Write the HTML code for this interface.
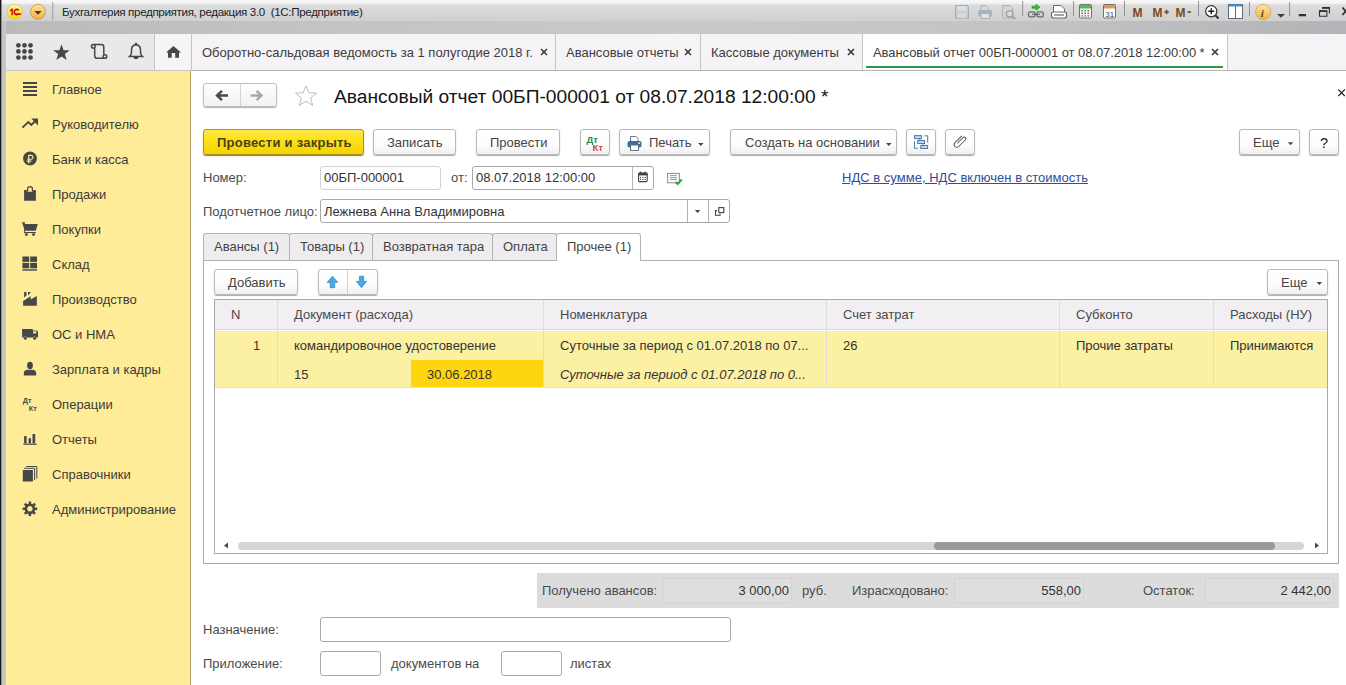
<!DOCTYPE html>
<html><head><meta charset="utf-8">
<style>
*{box-sizing:border-box;margin:0;padding:0}
html,body{width:1346px;height:685px;overflow:hidden;background:#fff;font-family:"Liberation Sans",sans-serif;font-size:13px;color:#4d4d4d}
.a{position:absolute}
.t{position:absolute;white-space:nowrap;line-height:15px}
svg{position:absolute;overflow:visible}
#titlebar{left:0;top:0;width:1346px;height:34px;background:linear-gradient(#f8f8f8 0,#f4f4f4 3px,#dcdcdc 5px,#d0d0d0 21px,#c0c0c0 21px,#c0c0c0 34px)}
#band{left:0;top:21px;width:1346px;height:13px;background:linear-gradient(90deg,#bababa 0,#c4c4c4 25%,#c9c9cb 50%,#c4c4c6 75%,#b4b4b8 100%)}
#frameL{left:0;top:21px;width:6px;height:664px;background:linear-gradient(90deg,#181818 0,#181818 1.2px,#8e8e8e 1.2px,#9a9a9a 2.2px,#c4c4c4 2.2px,#c8c8c8 6px)}
#secpanel{left:6px;top:34px;width:148px;height:37px;background:#e9e9e9;border-bottom:1px solid #c8c8c8}
#homebtn{left:154px;top:34px;width:38px;height:37px;background:#f6f4f6;border-left:1px solid #c4c4c4;border-right:1px solid #c4c4c4;border-bottom:1px solid #c8c8c8}
#tabsbar{left:192px;top:34px;width:1154px;height:37px;background:#f6f3f6;border-bottom:1px solid #b4b4b4}
.otab{position:absolute;top:0;height:36px;border-right:1px solid #c4c4c4}
.otab .t{top:11px;left:10px;color:#3c3c3c}
.otab .x{position:absolute;top:14px;width:8px;height:8px}
#sidebar{left:6px;top:71px;width:185px;height:614px;background:#feec98;border-right:1px solid #b2a462}
.sitem{left:46px;color:#3b3b3b}
.ic{fill:#474747}
</style></head>
<body>
<div id="titlebar" class="a"></div><div id="band" class="a"></div>
<div id="frameL" class="a"></div><div class="a" style="left:0;top:0;width:2.2px;height:21px;background:linear-gradient(90deg,#181818 0,#181818 1.2px,#8e8e8e 1.2px)"></div>
<!-- title icons -->
<svg width="60" height="26" style="left:0;top:0">
  <defs>
    <linearGradient id="g1c" x1="0" y1="0" x2="0" y2="1"><stop offset="0" stop-color="#fffbb0"/><stop offset="1" stop-color="#f8d800"/></linearGradient>
    <linearGradient id="gdd" x1="0" y1="0" x2="0" y2="1"><stop offset="0" stop-color="#fde29a"/><stop offset="1" stop-color="#f6ad45"/></linearGradient>
  </defs>
  <circle cx="14.7" cy="11.8" r="7.5" fill="url(#g1c)" stroke="#e2c45a" stroke-width="0.8"/>
  <path d="M9.6 10.2 l2.2 -1.6 h1.1 v6.6 h-1.5 v-4.6 l-1.2 .8z" fill="#c81400"/>
  <path d="M18.8 10.3 a2.6 2.6 0 1 0 0 3.4" fill="none" stroke="#c81400" stroke-width="1.7"/>
  <path d="M15.6 14.1 h5.6" stroke="#c81400" stroke-width="1.4"/>
  <circle cx="38" cy="11.8" r="7.5" fill="url(#gdd)" stroke="#c69346" stroke-width="0.8"/>
  <path d="M34.3 10.9 h7.4 l-3.7 3.8z" fill="#4a3b22"/>
  <rect x="52.3" y="2" width="0.9" height="18" fill="#9a9a9a"/>
</svg>
<span class="t" style="left:62px;top:4px;font-size:11.6px;letter-spacing:-0.34px;color:#1a1f2a">Бухгалтерия предприятия, редакция 3.0&nbsp; (1С:Предприятие)</span>

<svg width="400" height="26" style="left:946px;top:0">
  <g transform="translate(-946 0)">
  <!-- save disabled -->
  <path d="M955.5 5.5 h12 l1 1 v11.7 h-13z" fill="#c9ced4" stroke="#a3abb4" stroke-width="1"/>
  <rect x="957.5" y="6" width="9" height="4.5" fill="#dde1e5"/>
  <rect x="958" y="13" width="8" height="5" fill="#d5dbd5"/>
  <!-- printer disabled -->
  <path d="M981 5.5 h5 l2 2 v3 h-7z" fill="#d8d8d8" stroke="#a8aeb4" stroke-width=".9"/>
  <rect x="978.2" y="10" width="14" height="6.5" rx="1.5" fill="#aab4c0"/>
  <rect x="981" y="13.5" width="8.5" height="5" fill="#e2e2e2" stroke="#a8aeb4" stroke-width=".9"/>
  <!-- preview disabled -->
  <path d="M1002.7 5.5 h7 l3 3 v9.7 h-10z" fill="#d6d6d6" stroke="#a8aeb4" stroke-width=".9"/>
  <circle cx="1009.6" cy="13.8" r="3.2" fill="#d8dde2" stroke="#9aa2aa" stroke-width="1.4"/>
  <path d="M1011.8 16 l3.4 3" stroke="#9aa2aa" stroke-width="1.8"/>
  <rect x="1022.3" y="1" width="0.9" height="15" fill="#8a8a8a"/>
  <!-- upload arrow + chain -->
  <path d="M1032 6.2 h4 v-2 l4 3 -4 3 v-2 h-4z" fill="#2ec02e" stroke="#1b8a1b" stroke-width=".6"/>
  <rect x="1028.5" y="11.8" width="6.5" height="5" rx="1.6" fill="none" stroke="#6a6a6a" stroke-width="1.3"/>
  <rect x="1036.8" y="11.8" width="6.5" height="5" rx="1.6" fill="none" stroke="#6a6a6a" stroke-width="1.3"/>
  <path d="M1032 14.3 h8" stroke="#6a6a6a" stroke-width="1.2"/>
  <!-- doc + chain -->
  <path d="M1053.5 5.5 h7.5 l3.5 3.5 v4 h-11z" fill="#fff" stroke="#6a6a6a" stroke-width="1"/>
  <rect x="1051.5" y="12" width="15" height="6" rx="2" fill="#fff" stroke="#6a6a6a" stroke-width="1.2"/>
  <path d="M1054 15 h10" stroke="#6a6a6a" stroke-width="1.2"/>
  <rect x="1073" y="1" width="0.9" height="15" fill="#8a8a8a"/>
  <!-- calculator -->
  <rect x="1079.5" y="4.5" width="12" height="13.5" rx="1" fill="#f4f4f4" stroke="#707070" stroke-width="1"/>
  <rect x="1080" y="5" width="11" height="3.5" fill="#4fc04f"/>
  <g fill="#6a6a6a"><rect x="1081.5" y="10" width="1.4" height="1.4"/><rect x="1084.5" y="10" width="1.4" height="1.4"/><rect x="1087.5" y="10" width="1.4" height="1.4" fill="#d02020"/>
  <rect x="1081.5" y="12.6" width="1.4" height="1.4"/><rect x="1084.5" y="12.6" width="1.4" height="1.4"/><rect x="1087.5" y="12.6" width="1.4" height="1.4"/>
  <rect x="1081.5" y="15.2" width="1.4" height="1.4"/><rect x="1084.5" y="15.2" width="1.4" height="1.4"/><rect x="1087.5" y="15.2" width="1.4" height="1.4"/></g>
  <!-- calendar -->
  <rect x="1103.5" y="4.5" width="12" height="13.5" rx="1" fill="#fff" stroke="#707070" stroke-width="1"/>
  <rect x="1104" y="5" width="11" height="3.5" fill="#e09860"/>
  <text x="1105.2" y="16.6" font-family="Liberation Sans" font-size="8" fill="#404040">31</text>
  <rect x="1124" y="1" width="0.9" height="15" fill="#8a8a8a"/>
  <!-- M -->
  <g font-family="Liberation Sans" font-weight="bold" font-size="12" fill="#7a4a22">
    <text x="1132.4" y="16.5">M</text><text x="1152.6" y="16.5">M</text><text x="1175.5" y="16.5">M</text>
  </g>
  <path d="M1164.3 12 h4.6 M1166.6 9.7 v4.6" stroke="#7a4a22" stroke-width="1.6"/>
  <path d="M1187.5 12 h3.6" stroke="#7a4a22" stroke-width="1.6"/>
  <rect x="1198" y="1" width="0.9" height="15" fill="#8a8a8a"/>
  <!-- zoom -->
  <circle cx="1211.3" cy="11.3" r="5.6" fill="#fff" stroke="#303030" stroke-width="1.2"/>
  <path d="M1208.3 11.3 h6 M1211.3 8.3 v6" stroke="#1a1a1a" stroke-width="1.4"/>
  <path d="M1215.5 15.5 l3 3" stroke="#303030" stroke-width="2"/>
  <!-- panel -->
  <rect x="1228.5" y="4.5" width="14" height="14" fill="#fff" stroke="#606a76" stroke-width="1"/>
  <rect x="1229" y="4.5" width="13" height="2" fill="#3c8fd8"/>
  <path d="M1235.5 6.5 v12" stroke="#606a76" stroke-width="1"/>
  <rect x="1249" y="2" width="0.9" height="14" fill="#8a8a8a"/>
  <!-- info -->
  <defs><linearGradient id="ginf" x1="0" y1="0" x2="0" y2="1"><stop offset="0" stop-color="#fde6a6"/><stop offset="1" stop-color="#f3b040"/></linearGradient></defs>
  <circle cx="1263.2" cy="12" r="7.6" fill="url(#ginf)" stroke="#d6a24a" stroke-width=".8"/>
  <text x="1260.8" y="16.8" font-family="Liberation Serif" font-weight="bold" font-style="italic" font-size="11" fill="#5a4420">i</text>
  <path d="M1277 14 h8 l-4 3.7z" fill="#404040"/>
  <rect x="1289.2" y="2" width="0.9" height="14" fill="#8a8a8a"/>
  <!-- window buttons -->
  <rect x="1298.8" y="14" width="7.2" height="2.3" fill="#303030"/>
  <path d="M1322.2 7.6 h7.2 v6 M1319.5 10.8 h7.4 v5.5 h-7.4z" fill="none" stroke="#303030" stroke-width="1.1"/>
  <rect x="1319.5" y="10.4" width="7.4" height="1.6" fill="#303030"/><rect x="1322" y="7.2" width="7.6" height="1.6" fill="#303030"/>
  <path d="M1342.5 7.5 l6 7.5 M1348.5 7.5 l-6 7.5" stroke="#303030" stroke-width="1.8"/>
  </g>
</svg>

<div id="secpanel" class="a"></div>
<div id="homebtn" class="a"></div>
<!-- section panel icons -->
<svg width="190" height="36" style="left:0;top:34px">
  <g class="ic">
    <circle cx="18.4" cy="11.3" r="2.35"/><circle cx="24.45" cy="11.3" r="2.35"/><circle cx="30.5" cy="11.3" r="2.35"/><circle cx="18.4" cy="17.4" r="2.35"/><circle cx="24.45" cy="17.4" r="2.35"/><circle cx="30.5" cy="17.4" r="2.35"/><circle cx="18.4" cy="23.5" r="2.35"/><circle cx="24.45" cy="23.5" r="2.35"/><circle cx="30.5" cy="23.5" r="2.35"/>
    <path d="M61.50 10.20 L63.57 16.15 L69.87 16.28 L64.85 20.09 L66.67 26.12 L61.50 22.52 L56.33 26.12 L58.15 20.09 L53.13 16.28 L59.43 16.15z"/>
    <path d="M173.5 12 L181 18.6 H179 V23.8 H175.2 V18.9 H171.7 V23.8 H168 V18.6 H166 z"/>
  </g>
  <g fill="none" stroke="#474747" stroke-width="1.5">
    <path d="M93.6 10.5 H101.2 Q103.8 10.5 103.8 13.1 V20.6 M104.8 24.3 H97.3 Q94.7 24.3 94.7 21.7 V14.2"/><circle cx="93.3" cy="12.3" r="1.85"/><circle cx="104.9" cy="22.5" r="1.85"/>
    <path d="M129.5 22.5 h13 q-2 -1.8 -2 -4 v-3 q0 -4.3 -4.5 -4.8 q-4.5 .5 -4.5 4.8 v3 q0 2.2 -2 4z"/>
  </g>
  <g class="ic"><rect x="134.8" y="8.8" width="2.4" height="2.2" rx="1"/><path d="M133.5 23 h5 q0 2.2 -2.5 2.2 q-2.5 0 -2.5 -2.2z"/></g>
</svg>

<div id="tabsbar" class="a">
  <div class="otab" style="left:0;width:364px"><span class="t">Оборотно-сальдовая ведомость за 1 полугодие 2018 г.</span>
    <svg class="x" style="left:348px" viewBox="0 0 8 8"><path d="M1 1L7 7M7 1L1 7" stroke="#3a3a3a" stroke-width="1.6"/></svg></div>
  <div class="otab" style="left:364px;width:145px"><span class="t">Авансовые отчеты</span>
    <svg class="x" style="left:128px" viewBox="0 0 8 8"><path d="M1 1L7 7M7 1L1 7" stroke="#3a3a3a" stroke-width="1.6"/></svg></div>
  <div class="otab" style="left:509px;width:162px"><span class="t">Кассовые документы</span>
    <svg class="x" style="left:146px" viewBox="0 0 8 8"><path d="M1 1L7 7M7 1L1 7" stroke="#3a3a3a" stroke-width="1.6"/></svg></div>
  <div class="otab" style="left:671px;width:365px;background:#fff"><span class="t" style="letter-spacing:-0.065px">Авансовый отчет 00БП-000001 от 08.07.2018 12:00:00 *</span>
    <svg class="x" style="left:348px" viewBox="0 0 8 8"><path d="M1 1L7 7M7 1L1 7" stroke="#3a3a3a" stroke-width="1.6"/></svg>
    <div class="a" style="left:3px;top:32px;width:357px;height:2px;background:#2a9a4a"></div></div>
</div>

<div id="sidebar" class="a">
  <span class="t sitem" style="top:11px">Главное</span>
  <span class="t sitem" style="top:46px">Руководителю</span>
  <span class="t sitem" style="top:81px">Банк и касса</span>
  <span class="t sitem" style="top:116px">Продажи</span>
  <span class="t sitem" style="top:151px">Покупки</span>
  <span class="t sitem" style="top:186px">Склад</span>
  <span class="t sitem" style="top:221px">Производство</span>
  <span class="t sitem" style="top:256px">ОС и НМА</span>
  <span class="t sitem" style="top:291px">Зарплата и кадры</span>
  <span class="t sitem" style="top:326px">Операции</span>
  <span class="t sitem" style="top:361px">Отчеты</span>
  <span class="t sitem" style="top:396px">Справочники</span>
  <span class="t sitem" style="top:431px">Администрирование</span>
</div>
<!-- sidebar icons (body coords) -->
<svg width="60" height="520" style="left:0;top:0">
  <g class="ic">
    <rect x="23" y="82" width="14" height="2"/><rect x="23" y="86" width="14" height="2"/><rect x="23" y="90" width="14" height="2"/><rect x="23" y="94" width="14" height="2"/>
    <path d="M22.4 127.6 l5.9 -5.6 3 3 4.8 -4.7" fill="none" stroke="#474747" stroke-width="1.9"/><path d="M31.2 118.6 h6.8 v6.8z" fill="#474747"/>
    <circle cx="30" cy="158.5" r="6.9"/>
    <path d="M24.1 200.8 v-10.8 h2.4 q.6 1.8 1.8 1.8 h3.4 q1.2 0 1.8 -1.8 h2.4 v10.8z"/><path d="M27.6 191.2 v-2.4 q0 -2.2 2.4 -2.2 q2.4 0 2.4 2.2 v2.4" fill="none" stroke="#474747" stroke-width="1.2"/>
    <path d="M22 222.2 h2.9 v1.8 h12.9 l-2 6.8 h-10.9 z"/><rect x="24.1" y="224" width="0.9" height="9"/><rect x="24.1" y="232" width="11.7" height="1.1"/><circle cx="26.4" cy="234.6" r="1.45"/><circle cx="33.6" cy="234.6" r="1.45"/>
    <rect x="22.4" y="256.5" width="6.8" height="5.4"/><rect x="30.2" y="256.5" width="6.8" height="5.4"/><rect x="22.4" y="262.9" width="6.8" height="5.4"/><rect x="30.2" y="262.9" width="6.8" height="5.4"/><rect x="22.4" y="269.3" width="14.6" height="1.4"/>
    <path d="M23.1 305.7 v-4.8 l7.6 -4.7 v3.2 l6.1 -3.4 v9.7z"/><path d="M24.1 292 h2.4 v3.6 l-2.4 2z M28 292 h2.9 l-2.9 3.6z"/>
    <path d="M22.1 328.9 h10.6 v1.6 h3.6 q1.7 0 1.7 1.7 v5.3 h-15.9z"/><rect x="33.1" y="331.2" width="3.3" height="2.3" fill="#e8e2c4"/><circle cx="25.4" cy="338.3" r="1.9" fill="#feec98"/><circle cx="34.7" cy="338.3" r="1.9" fill="#feec98"/><circle cx="25.4" cy="338.3" r="1.5"/><circle cx="34.7" cy="338.3" r="1.5"/>
    <ellipse cx="30" cy="365.4" rx="2.9" ry="3.6"/><path d="M23.8 375.5 v-2 q0 -3.6 4 -3.8 h4.4 q4 .2 4 3.8 v2z"/>
    <rect x="24.1" y="436.1" width="2.5" height="7.2"/><rect x="28.6" y="438.2" width="2.4" height="5.1"/><rect x="32.5" y="434" width="2.7" height="9.3"/><rect x="23.3" y="443.6" width="13.5" height="1.2"/>
    <rect x="22.8" y="470" width="10.1" height="11.5"/><path d="M24.1 468.3 h10.5 v11.9" fill="none" stroke="#474747" stroke-width="1"/><path d="M26.2 466.5 h10.6 v12" fill="none" stroke="#474747" stroke-width="1"/>
    <g transform="translate(29.9 508.8)"><path d="M0 -5.3 a5.3 5.3 0 1 0 .01 0z M0 -2.7 a2.7 2.7 0 1 1 -.01 0z" fill-rule="evenodd"/><rect x="-1.25" y="-7.3" width="2.5" height="3" transform="rotate(0)"/><rect x="-1.25" y="-7.3" width="2.5" height="3" transform="rotate(45)"/><rect x="-1.25" y="-7.3" width="2.5" height="3" transform="rotate(90)"/><rect x="-1.25" y="-7.3" width="2.5" height="3" transform="rotate(135)"/><rect x="-1.25" y="-7.3" width="2.5" height="3" transform="rotate(180)"/><rect x="-1.25" y="-7.3" width="2.5" height="3" transform="rotate(225)"/><rect x="-1.25" y="-7.3" width="2.5" height="3" transform="rotate(270)"/><rect x="-1.25" y="-7.3" width="2.5" height="3" transform="rotate(315)"/></g>
  </g>
  <path d="M28.7 163.4 v-8 h2.4 a1.9 1.9 0 0 1 0 3.8 h-3.8 M26.8 161.1 h4.6" stroke="#feec98" stroke-width="1.15" fill="none"/>
  <text x="22.8" y="402.6" font-family="Liberation Sans" font-weight="bold" font-size="7.2" fill="#474747">Дт</text>
  <text x="28.8" y="410.9" font-family="Liberation Sans" font-weight="bold" font-size="7.2" fill="#474747">Кт</text>
</svg>
<style>
.btn{position:absolute;top:129px;height:26px;border:1px solid #b9b9b9;border-radius:3px;background:linear-gradient(#fff 0,#fdfdfd 60%,#f0f0f0 100%);box-shadow:0 1px 1px #a9a9a9}
.btn .t{top:5px;color:#444}
.lbl{color:#4a4a4a}
.fld{position:absolute;border:1px solid #a9a9a9;border-radius:3px;background:#fff}
.dd{position:absolute;width:5.6px;height:3px;background:#474747;clip-path:polygon(0 0,100% 0,50% 100%)}
</style>
<!-- nav -->
<div class="a" style="left:203px;top:83px;width:74px;height:24px;border:1px solid #bdbdbd;border-radius:3px;background:linear-gradient(#fff,#f1f1f1);box-shadow:0 1px 1px #b0b0b0"></div>
<div class="a" style="left:240px;top:84px;width:1px;height:22px;background:#d4d4d4"></div>
<svg width="80" height="26" style="left:200px;top:82px">
  <path d="M16.5 13.5 h11.5 M22 8.8 l-5 4.7 5 4.7" stroke="#474747" stroke-width="2.4" fill="none"/>
  <path d="M62 13.5 h-11.5 M56.5 8.8 l5 4.7 -5 4.7" stroke="#a8a8a8" stroke-width="2.4" fill="none"/>
</svg>
<svg width="26" height="24" style="left:293px;top:84px">
  <path d="M13 1.8 l2.9 7 7.6 .4 -5.9 4.8 2 7.4 -6.6 -4.2 -6.6 4.2 2 -7.4 -5.9 -4.8 7.6 -.4z" fill="#fff" stroke="#bcbcbc" stroke-width="1"/>
</svg>
<span class="t" style="left:334px;top:86px;font-size:19.2px;line-height:22px;color:#141414">Авансовый отчет 00БП-000001 от 08.07.2018 12:00:00 *</span>
<svg width="10" height="10" style="left:1336px;top:87px"><path d="M2.3 2.5 L8.8 9 M8.8 2.5 L2.3 9" stroke="#222" stroke-width="1.1"/></svg>

<!-- command bar -->
<div class="btn" style="left:203px;width:161px;border-color:#a89420;background:linear-gradient(#fee64a 0,#fde31c 35%,#f6d200 100%);box-shadow:0 1px 1px #8c7c30"><span class="t" style="left:13px;font-weight:bold;color:#4a4214;letter-spacing:0.25px">Провести и закрыть</span></div>
<div class="btn" style="left:373px;width:83px"><span class="t" style="left:13px">Записать</span></div>
<div class="btn" style="left:476px;width:84px"><span class="t" style="left:13px">Провести</span></div>
<div class="btn" style="left:580px;width:30px">
  <span class="t" style="left:5.5px;top:2px;font-size:9.5px;font-weight:bold;color:#2a8a55;letter-spacing:-0.1px">Дт</span>
  <span class="t" style="left:11.5px;top:9.5px;font-size:9.5px;font-weight:bold;color:#c24a4a;letter-spacing:-0.1px">Кт</span>
</div>
<div class="btn" style="left:619px;width:91px">
  <svg width="20" height="20" style="left:6px;top:4px">
    <path d="M4.5 2.5 h5.5 l2 2 v3 h-7.5z" fill="#fff" stroke="#5a6a7a" stroke-width="0.9"/>
    <rect x="1.5" y="7" width="14" height="6.5" rx="2" fill="#3f6c99"/>
    <rect x="4.5" y="11" width="8" height="5.5" fill="#fff" stroke="#5a6a7a" stroke-width="0.9"/>
    <rect x="12" y="8.5" width="2" height="1.2" fill="#fff"/>
  </svg>
  <span class="t" style="left:29px">Печать</span>
  <div class="dd" style="left:78px;top:13px"></div>
</div>
<div class="btn" style="left:730px;width:167px"><span class="t" style="left:14px">Создать на основании</span><div class="dd" style="left:155px;top:13px"></div></div>
<div class="btn" style="left:906px;width:30px"></div>
<div class="btn" style="left:945px;width:30px"></div>
<svg width="70" height="30" style="left:906px;top:128px">
 <g transform="translate(-906 -128)">
  <path d="M924.5 135.8 h3.2 v6.8 M914.5 141.3 v7 h3.2" stroke="#4f7ca6" stroke-width="1" fill="none"/>
  <path d="M919.8 138.7 v1.6 M923 143.6 v1.6" stroke="#4f7ca6" stroke-width="1"/>
  <rect x="914.6" y="135.6" width="6.8" height="3" fill="#bcdcfa" stroke="#4f7ca6" stroke-width="1"/>
  <rect x="917.7" y="140.5" width="6.8" height="3" fill="#bcdcfa" stroke="#4f7ca6" stroke-width="1"/>
  <rect x="920.8" y="145.5" width="6.8" height="3" fill="#bcdcfa" stroke="#4f7ca6" stroke-width="1"/>
  <path transform="translate(960 141.5) rotate(45)" d="M-2.7 -5.2 V4.4 A2.7 2.7 0 0 0 2.7 4.4 V-4.8 A1.7 1.7 0 0 0 -0.7 -4.8 V3.2" stroke="#5a5a5a" stroke-width="1" fill="none"/>
 </g>
</svg>
<div class="btn" style="left:1239px;width:61px"><span class="t" style="left:13px">Еще</span><div class="dd" style="left:47.8px;top:12.3px"></div></div>
<div class="btn" style="left:1309px;width:30px"><span class="t" style="left:10px;font-size:14.5px;top:5.5px;color:#1a1a1a">?</span></div>

<!-- fields -->
<span class="t lbl" style="left:203px;top:170px">Номер:</span>
<div class="fld" style="left:320px;top:166px;width:121px;height:24px;border-color:#d2d2d2"></div>
<span class="t" style="left:324px;top:170px;color:#333">00БП-000001</span>
<span class="t lbl" style="left:451px;top:170px">от:</span>
<div class="fld" style="left:472px;top:166px;width:182px;height:24px"></div>
<div class="a" style="left:632px;top:167px;width:1px;height:22px;background:#b4b4b4"></div>
<span class="t" style="left:476px;top:170px;color:#333">08.07.2018 12:00:00</span>
<svg width="14" height="14" style="left:636px;top:171px">
  <rect x="2.6" y="2" width="8.6" height="8.6" rx="1.2" fill="none" stroke="#404040" stroke-width="1.1"/>
  <rect x="2.4" y="1.8" width="9" height="2.6" fill="#404040"/>
  <circle cx="4.5" cy="1.3" r=".8" fill="#404040"/><circle cx="9.3" cy="1.3" r=".8" fill="#404040"/>
  <g fill="#404040"><circle cx="4.6" cy="6.4" r=".65"/><circle cx="6.9" cy="6.4" r=".65"/><circle cx="9.2" cy="6.4" r=".65"/><circle cx="4.6" cy="8.4" r=".65"/><circle cx="6.9" cy="8.4" r=".65"/><circle cx="9.2" cy="8.4" r=".65"/></g>
</svg>
<svg width="20" height="16" style="left:666px;top:171px">
  <rect x="1.6" y="2.4" width="11.8" height="9.4" fill="#fbfcfd" stroke="#8a8e94" stroke-width="1"/>
  <path d="M4 4.6 h7 M4 6.6 h7 M4 8.5 h7" stroke="#8a8e94" stroke-width=".9"/>
  <path d="M9.6 10.8 l2 2.3 4.2 -4.6" stroke="#25a83a" stroke-width="2" fill="none"/>
</svg>
<span class="t" style="left:842px;top:170px;color:#2c4f9c;text-decoration:underline;letter-spacing:0.02px">НДС в сумме, НДС включен в стоимость</span>

<span class="t lbl" style="left:203px;top:204px">Подотчетное лицо:</span>
<div class="fld" style="left:320px;top:199px;width:410px;height:24px"></div>
<div class="a" style="left:687px;top:200px;width:1px;height:22px;background:#b4b4b4"></div>
<div class="a" style="left:708px;top:200px;width:1px;height:22px;background:#b4b4b4"></div>
<span class="t" style="left:324px;top:204px;color:#333">Лежнева Анна Владимировна</span>
<div class="dd" style="left:694.8px;top:210px"></div>
<svg width="14" height="14" style="left:712px;top:204px">
  <rect x="6.8" y="3.6" width="5" height="5" fill="none" stroke="#404040" stroke-width="1.1"/>
  <path d="M5 6.6 h-1.5 v4.6 h4.6 v-1.5" fill="none" stroke="#404040" stroke-width="1.1"/>
</svg>

<!-- tabs -->
<div class="a" style="left:203px;top:260px;width:1136px;height:304px;border:1px solid #a9a9a9;border-top-color:#b0b0b0"></div>
<div class="a ftab" style="left:203px;width:87px"><span class="t" style="left:10px">Авансы (1)</span></div>
<div class="a ftab" style="left:289px;width:84px"><span class="t" style="left:10px">Товары (1)</span></div>
<div class="a ftab" style="left:372px;width:121px"><span class="t" style="left:10px">Возвратная тара</span></div>
<div class="a ftab" style="left:492px;width:65px"><span class="t" style="left:10px">Оплата</span></div>
<div class="a ftab act" style="left:556px;width:85px"><span class="t" style="left:10px">Прочее (1)</span></div>
<style>
.ftab{top:233px;height:27px;border:1px solid #b4b4b4;border-bottom:none;border-radius:3px 3px 0 0;background:#eeecee}
.ftab .t{top:5px;color:#444}
.ftab.act{background:#fff;height:28px}
</style>

<div class="btn" style="left:214px;top:269px;width:84px"><span class="t" style="left:13px">Добавить</span></div>
<div class="btn" style="left:318px;top:269px;width:60px"></div>
<div class="a" style="left:347px;top:270px;width:1px;height:24px;background:#cfcfcf"></div>
<svg width="60" height="24" style="left:318px;top:270px">
  <path d="M14.5 6.2 L9.1 12.4 H12.2 V17.7 H16.7 V12.4 H19.8z" fill="#44aaea" stroke="#2f80c2" stroke-width=".7"/>
  <path d="M43.5 17.7 L38.3 11.4 H41.4 V6.2 H45.7 V11.4 H48.7z" fill="#44aaea" stroke="#2f80c2" stroke-width=".7"/>
</svg>
<div class="btn" style="left:1267px;top:269px;width:61px"><span class="t" style="left:13px">Еще</span><div class="dd" style="left:48.5px;top:12px"></div></div>

<!-- table -->
<div class="a" style="left:214px;top:299px;width:1114px;height:255px;border:1px solid #a9a9a9;background:#fff"></div>
<div class="a" style="left:215px;top:300px;width:1112px;height:30px;background:#f2eff2;border-bottom:1px solid #d8d6d8"></div>
<div class="a" style="left:215px;top:331px;width:1112px;height:57px;background:#fcf0a3;border-bottom:1px solid #e6e2c8"></div>
<div class="a" style="left:278px;top:359px;width:549px;height:1px;background:#f4ecc6"></div>
<div class="a" style="left:411px;top:360px;width:132px;height:27px;background:#fdd511"></div>
<div class="a" style="left:277px;top:300px;width:1px;height:88px;background:#dedcde"></div>
<div class="a" style="left:543px;top:300px;width:1px;height:88px;background:#dedcde"></div>
<div class="a" style="left:826px;top:300px;width:1px;height:88px;background:#dedcde"></div>
<div class="a" style="left:1059px;top:300px;width:1px;height:88px;background:#dedcde"></div>
<div class="a" style="left:1213px;top:300px;width:1px;height:88px;background:#dedcde"></div>
<span class="t" style="left:231px;top:307px;color:#4a4a4a">N</span>
<span class="t" style="left:294px;top:307px;color:#4a4a4a">Документ (расхода)</span>
<span class="t" style="left:560px;top:307px;color:#4a4a4a">Номенклатура</span>
<span class="t" style="left:843px;top:307px;color:#4a4a4a">Счет затрат</span>
<span class="t" style="left:1076px;top:307px;color:#4a4a4a">Субконто</span>
<span class="t" style="left:1230px;top:307px;color:#4a4a4a">Расходы (НУ)</span>
<span class="t" style="left:253px;top:338px;color:#333">1</span>
<span class="t" style="left:294px;top:338px;color:#333">командировочное удостоверение</span>
<span class="t" style="left:560px;top:338px;color:#333">Суточные за период с 01.07.2018 по 07...</span>
<span class="t" style="left:843px;top:338px;color:#333">26</span>
<span class="t" style="left:1076px;top:338px;color:#333">Прочие затраты</span>
<span class="t" style="left:1230px;top:338px;color:#333">Принимаются</span>
<span class="t" style="left:294px;top:367px;color:#333">15</span>
<span class="t" style="left:427px;top:367px;color:#333">30.06.2018</span>
<span class="t" style="left:560px;top:367px;color:#333;font-style:italic">Суточные за период с 01.07.2018 по 0...</span>
<!-- scrollbar -->
<div class="a" style="left:238px;top:542px;width:66px;height:8px;border-radius:4px;background:#d6d6d6;width:1066px"></div>
<div class="a" style="left:934px;top:542px;width:341px;height:8px;border-radius:4px;background:#9a9a9a"></div>
<svg width="10" height="10" style="left:222px;top:540px"><path d="M2 5.5 l4 -3 v6z" fill="#4a4a4a"/></svg>
<svg width="10" height="10" style="left:1313px;top:540px"><path d="M6 5.5 l-4 -3 v6z" fill="#4a4a4a"/></svg>

<!-- totals -->
<div class="a" style="left:537px;top:573px;width:802px;height:35px;background:#dcdcdc"></div>
<span class="t lbl" style="left:542px;top:583px">Получено авансов:</span>
<div class="a" style="left:663px;top:578px;width:129px;height:25px;border:1px solid #d3d3d3;background:#dedede"></div>
<span class="t" style="left:663px;top:583px;width:126px;text-align:right;color:#333">3 000,00</span>
<span class="t lbl" style="left:802px;top:583px">руб.</span>
<span class="t lbl" style="left:852px;top:583px">Израсходовано:</span>
<div class="a" style="left:954px;top:578px;width:130px;height:25px;border:1px solid #d3d3d3;background:#dedede"></div>
<span class="t" style="left:954px;top:583px;width:127px;text-align:right;color:#333">558,00</span>
<span class="t lbl" style="left:1143px;top:583px">Остаток:</span>
<div class="a" style="left:1205px;top:578px;width:129px;height:25px;border:1px solid #d3d3d3;background:#dedede"></div>
<span class="t" style="left:1205px;top:583px;width:126px;text-align:right;color:#333">2 442,00</span>

<!-- bottom -->
<span class="t lbl" style="left:203px;top:622px">Назначение:</span>
<div class="fld" style="left:320px;top:617px;width:411px;height:25px"></div>
<span class="t lbl" style="left:203px;top:656px">Приложение:</span>
<div class="fld" style="left:320px;top:651px;width:61px;height:25px"></div>
<span class="t lbl" style="left:391px;top:656px">документов на</span>
<div class="fld" style="left:501px;top:651px;width:61px;height:25px"></div>
<span class="t lbl" style="left:570px;top:656px">листах</span>

</body></html>
